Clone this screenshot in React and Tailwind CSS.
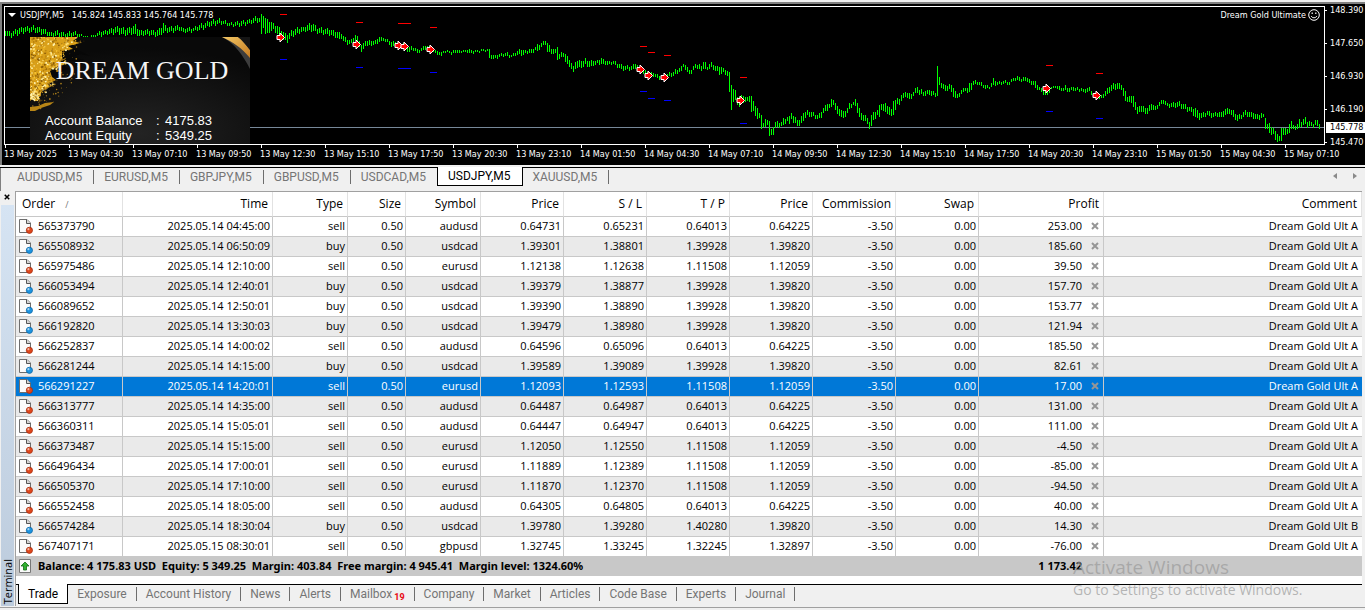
import { useState } from 'react'

// Bar extremes per chart segment: [x, high, low], in thirds of a chart unit
const SEGMENTS = [
  {
    start: 0,
    points: [
      [15, 91, 106], [33, 97, 111], [57, 84, 102], [81, 81, 96], [99, 79, 94], [123, 84, 101], [141, 91, 106],
      [153, 98, 111], [171, 93, 108], [195, 99, 111], [225, 94, 108], [240, 103, 111], [262, 109, 112], [280, 104, 110],
      [300, 94, 109], [320, 91, 103], [335, 86, 102], [350, 80, 99], [375, 86, 105], [390, 82, 103], [399, 80, 100],
      [405, 72, 104], [411, 82, 106], [420, 92, 107], [450, 90, 105], [470, 93, 110], [480, 84, 106], [487, 78, 100],
      [490, 68, 99], [497, 80, 97], [510, 82, 97], [540, 77, 90], [550, 84, 97], [580, 84, 94], [605, 73, 88],
      [630, 62, 78], [650, 60, 74], [660, 58, 70], [690, 69, 78], [720, 65, 79], [745, 61, 72], [770, 50, 66],
      [778, 54, 67], [784, 42, 101], [790, 48, 84], [796, 55, 101], [802, 58, 100], [820, 70, 88], [838, 82, 108],
      [850, 97, 120], [862, 104, 128], [870, 96, 114], [890, 85, 104], [910, 81, 94], [930, 72, 92], [940, 71, 93],
      [950, 85, 99], [980, 86, 104], [1000, 91, 107], [1018, 97, 116],
    ],
  },
  {
    start: 340,
    points: [
      [4, 101, 118], [10, 107, 122], [22, 120, 134], [34, 118, 130], [46, 104, 120], [52, 107, 122], [64, 135, 156],
      [70, 130, 147], [76, 123, 139], [94, 124, 138], [106, 120, 132], [118, 110, 125], [130, 115, 124], [142, 116, 126],
      [148, 122, 136], [154, 127, 142], [166, 127, 142], [190, 130, 145], [208, 140, 155], [222, 140, 150],
      [232, 147, 159], [244, 144, 154], [256, 138, 150], [268, 137, 148], [286, 150, 158], [292, 153, 165],
      [304, 156, 167], [310, 152, 160], [328, 152, 160], [334, 155, 164], [346, 150, 160], [358, 150, 159],
      [376, 149, 154], [388, 147, 158], [394, 150, 160], [412, 150, 155], [430, 147, 153], [442, 146, 152],
      [448, 147, 174], [454, 165, 177], [466, 164, 175], [484, 159, 168], [502, 157, 169], [514, 165, 172],
      [526, 158, 168], [538, 148, 162], [544, 150, 168], [556, 149, 160], [574, 148, 159], [586, 141, 151],
      [592, 132, 153], [604, 130, 140], [616, 123, 135], [622, 128, 155], [634, 148, 162], [646, 147, 160],
      [652, 141, 179], [658, 162, 176], [670, 158, 170], [676, 161, 187], [688, 180, 200], [700, 198, 216],
      [706, 186, 206], [718, 180, 200], [730, 182, 200], [736, 174, 193], [748, 183, 200], [760, 184, 199],
      [772, 180, 189], [784, 174, 193], [796, 184, 195], [808, 182, 192], [826, 182, 194], [838, 193, 205],
      [850, 198, 212], [862, 196, 207], [874, 198, 211], [886, 192, 206], [898, 200, 210], [910, 207, 222],
      [922, 217, 226], [940, 219, 230], [952, 222, 233], [958, 228, 240], [970, 225, 240], [982, 222, 232],
      [988, 216, 228], [1000, 217, 227], [1006, 207, 221], [1018, 205, 215],
    ],
  },
  {
    start: 680,
    points: [
      [4, 197, 213], [10, 192, 202], [22, 200, 215], [34, 211, 222], [46, 192, 205], [64, 198, 212], [70, 186, 206],
      [76, 186, 207], [82, 200, 210], [94, 186, 201], [106, 199, 214], [112, 198, 214], [118, 201, 224],
      [130, 203, 217], [142, 212, 228], [148, 215, 276], [154, 256, 330], [160, 267, 306], [166, 270, 300],
      [172, 290, 315], [178, 290, 320], [190, 288, 308], [202, 291, 302], [208, 289, 306], [214, 289, 335],
      [220, 304, 334], [232, 324, 357], [238, 338, 355], [244, 345, 387], [250, 368, 382], [256, 357, 382],
      [262, 360, 376], [268, 363, 408], [274, 387, 404], [280, 382, 405], [286, 367, 385], [304, 367, 378],
      [310, 354, 375], [322, 351, 362], [328, 348, 372], [334, 340, 357], [340, 349, 369], [358, 360, 378],
      [370, 340, 363], [382, 330, 346], [394, 336, 350], [412, 345, 357], [424, 337, 354], [430, 324, 340],
      [442, 313, 333], [448, 312, 325], [454, 297, 320], [460, 301, 316], [472, 319, 342], [490, 334, 354],
      [502, 325, 340], [508, 310, 327], [520, 305, 315], [526, 297, 318], [532, 309, 340], [544, 338, 360],
      [556, 345, 362], [568, 367, 386], [574, 346, 378], [580, 337, 360], [592, 330, 345], [598, 315, 350],
      [604, 312, 330], [616, 309, 336], [634, 328, 348], [640, 303, 346], [652, 294, 312], [658, 297, 316],
      [664, 285, 303], [676, 276, 292], [688, 280, 297], [700, 275, 288], [712, 261, 278], [718, 270, 285],
      [736, 273, 287], [748, 270, 285], [766, 279, 290], [772, 198, 287], [778, 231, 255], [784, 249, 263],
      [796, 255, 273], [808, 252, 267], [820, 265, 292], [832, 283, 293], [844, 270, 282], [856, 264, 274],
      [862, 264, 278], [868, 250, 277], [880, 242, 255], [892, 245, 254], [904, 246, 257], [916, 255, 267],
      [928, 261, 267], [940, 234, 254], [952, 246, 254], [964, 247, 254], [976, 240, 250], [988, 246, 254],
      [1000, 233, 242], [1018, 232, 244],
    ],
  },
  {
    start: 1020,
    points: [
      [4, 236, 246], [16, 231, 243], [28, 237, 249], [40, 242, 254], [46, 243, 264], [58, 262, 270], [70, 270, 285],
      [82, 262, 285], [94, 262, 268], [106, 258, 264], [118, 258, 270], [130, 264, 272], [136, 255, 270],
      [148, 264, 276], [160, 262, 272], [184, 264, 273], [190, 267, 276], [208, 262, 274], [220, 280, 290],
      [232, 286, 297], [244, 285, 294], [256, 274, 287], [268, 262, 280], [280, 249, 267], [298, 249, 266],
      [304, 255, 270], [316, 273, 303], [322, 290, 305], [334, 288, 308], [340, 288, 320], [352, 322, 342],
      [358, 318, 336], [370, 317, 335], [382, 325, 342], [394, 313, 330], [406, 318, 331], [418, 306, 318],
      [430, 300, 313], [442, 308, 319], [466, 310, 325], [478, 302, 318], [490, 313, 327], [514, 322, 336],
      [526, 325, 352], [538, 340, 360], [550, 337, 350], [562, 334, 346], [574, 340, 355], [586, 337, 348],
      [604, 336, 351], [616, 326, 345], [628, 327, 342], [640, 331, 350], [652, 345, 363], [664, 344, 358],
      [676, 329, 344], [688, 337, 350], [700, 340, 357], [712, 342, 358], [724, 339, 355], [730, 341, 352],
      [736, 354, 388], [742, 373, 386], [748, 369, 400], [760, 385, 402], [766, 393, 420], [778, 407, 423],
      [784, 383, 423], [790, 384, 405], [802, 386, 403], [808, 372, 398], [814, 363, 388], [820, 374, 388],
      [832, 373, 387], [838, 358, 384], [844, 365, 380], [856, 351, 372], [862, 366, 385], [868, 362, 378],
      [880, 373, 383], [886, 360, 376], [892, 360, 378], [898, 373, 387],
    ],
  },
]

function buildBars() {
  let d = ''
  SEGMENTS.forEach(({ start, points }) => {
    let k = 0
    const end = start + points[points.length - 1][0] / 3
    for (let x = start % 2 ? start : start + 1; x <= end + 1; x += 2) {
      const t = (x - start) * 3 + 1
      if (t < points[0][0] - 3) continue
      while (k < points.length - 2 && points[k + 1][0] <= t) k++
      const [x0, h0, l0] = points[k]
      const [x1, h1, l1] = points[k + 1]
      const f = Math.min(1, Math.max(0, (t - x0) / (x1 - x0)))
      const wobble = f > 0 && f < 1 ? ((x * 7) % 3) - 1 : 0
      const high = Math.round((h0 + (h1 - h0) * f) / 3) + wobble
      const low = Math.round((l0 + (l1 - l0) * f) / 3) + wobble
      d += `M${x + 0.5} ${high}V${Math.max(low, high + 2)}`
    }
  })
  return d
}

const BARS = buildBars()

// x, arrow y, stop line y, target line y
const TRADES = [
  [280, 37, 14, 59], [356, 44, 22, 67], [398, 45, 23, 68], [404, 46, 23, 68], [430, 49, 27, 72], [640, 69, 46, 91],
  [648, 75, 52, 98], [664, 77, 55, 100], [740, 100, 77, 123], [1046, 88, 65, 111], [1096, 95, 73, 118],
]

const TIMES = [
  '13 May 2025', '13 May 04:30', '13 May 07:10', '13 May 09:50', '13 May 12:30', '13 May 15:10', '13 May 17:50',
  '13 May 20:30', '13 May 23:10', '14 May 01:50', '14 May 04:30', '14 May 07:10', '14 May 09:50', '14 May 12:30',
  '14 May 15:10', '14 May 17:50', '14 May 20:30', '14 May 23:10', '15 May 01:50', '15 May 04:30', '15 May 07:10',
]

const PRICES = ['148.390', '147.650', '146.930', '146.190', '145.470']

const CHART_TABS = ['AUDUSD,M5', 'EURUSD,M5', 'GBPJPY,M5', 'GBPUSD,M5', 'USDCAD,M5', 'USDJPY,M5', 'XAUUSD,M5']

const TERMINAL_TABS = [
  'Trade', 'Exposure', 'Account History', 'News', 'Alerts', 'Mailbox', 'Company', 'Market', 'Articles', 'Code Base',
  'Experts', 'Journal',
]

const COLUMNS = [
  ['Order', 'w-[107px]'], ['Time', 'w-[150px]'], ['Type', 'w-[75px]'], ['Size', 'w-[58px]'], ['Symbol', 'w-[75px]'],
  ['Price', 'w-[83px]'], ['S / L', 'w-[83px]'], ['T / P', 'w-[83px]'], ['Price', 'w-[83px]'],
  ['Commission', 'w-[83px]'], ['Swap', 'w-[83px]'], ['Profit', 'w-[125px]'], ['Comment', ''],
]

const ORDERS = [
  ['565373790', '2025.05.14 04:45:00', 'sell', 'audusd', '0.64731', '0.65231', '0.64013', '0.64225', '253.00', 'A'],
  ['565508932', '2025.05.14 06:50:09', 'buy', 'usdcad', '1.39301', '1.38801', '1.39928', '1.39820', '185.60', 'A'],
  ['565975486', '2025.05.14 12:10:00', 'sell', 'eurusd', '1.12138', '1.12638', '1.11508', '1.12059', '39.50', 'A'],
  ['566053494', '2025.05.14 12:40:01', 'buy', 'usdcad', '1.39379', '1.38877', '1.39928', '1.39820', '157.70', 'A'],
  ['566089652', '2025.05.14 12:50:01', 'buy', 'usdcad', '1.39390', '1.38890', '1.39928', '1.39820', '153.77', 'A'],
  ['566192820', '2025.05.14 13:30:03', 'buy', 'usdcad', '1.39479', '1.38980', '1.39928', '1.39820', '121.94', 'A'],
  ['566252837', '2025.05.14 14:00:02', 'sell', 'audusd', '0.64596', '0.65096', '0.64013', '0.64225', '185.50', 'A'],
  ['566281244', '2025.05.14 14:15:00', 'buy', 'usdcad', '1.39589', '1.39089', '1.39928', '1.39820', '82.61', 'A'],
  ['566291227', '2025.05.14 14:20:01', 'sell', 'eurusd', '1.12093', '1.12593', '1.11508', '1.12059', '17.00', 'A'],
  ['566313777', '2025.05.14 14:35:00', 'sell', 'audusd', '0.64487', '0.64987', '0.64013', '0.64225', '131.00', 'A'],
  ['566360311', '2025.05.14 15:05:01', 'sell', 'audusd', '0.64447', '0.64947', '0.64013', '0.64225', '111.00', 'A'],
  ['566373487', '2025.05.14 15:15:00', 'sell', 'eurusd', '1.12050', '1.12550', '1.11508', '1.12059', '-4.50', 'A'],
  ['566496434', '2025.05.14 17:00:01', 'sell', 'eurusd', '1.11889', '1.12389', '1.11508', '1.12059', '-85.00', 'A'],
  ['566505370', '2025.05.14 17:10:00', 'sell', 'eurusd', '1.11870', '1.12370', '1.11508', '1.12059', '-94.50', 'A'],
  ['566552458', '2025.05.14 18:05:00', 'sell', 'audusd', '0.64305', '0.64805', '0.64013', '0.64225', '40.00', 'A'],
  ['566574284', '2025.05.14 18:30:04', 'buy', 'usdcad', '1.39780', '1.39280', '1.40280', '1.39820', '14.30', 'B'],
  ['567407171', '2025.05.15 08:30:01', 'sell', 'gbpusd', '1.32745', '1.33245', '1.32245', '1.32897', '-76.00', 'A'],
]

function buildFlakes() {
  const edge = [[0, 46], [8, 40], [14, 34], [20, 36], [28, 29], [35, 21], [42, 24], [50, 16], [56, 10], [64, 2]]
  const tones = ['#ffe27a', '#8a5c08', '#f7c331', '#b57d0c', '#fff2ae', '#d99c14']
  const flakes = []
  let seed = 17
  const rand = () => {
    seed = (seed * 16807) % 2147483647
    return seed / 2147483647
  }
  for (let i = 0; i < 620; i++) {
    const y = rand() * 64
    const k = edge.findIndex(([ey]) => ey > y)
    const limit = edge[(k < 1 ? edge.length : k) - 1][1]
    flakes.push([rand() * limit, y, 0.4 + rand() * 0.7, tones[i % tones.length]])
  }
  for (let i = 0; i < 90; i++) {
    const y = rand() * 72
    flakes.push([46 - y * 0.5 + (rand() + rand() - 1) * 22, y, 0.3 + rand() * 0.6, '#a87c1c'])
  }
  return flakes
}

const FLAKES = buildFlakes()

function GoldArt() {
  return (
    <svg className="absolute inset-0 h-full w-full" viewBox="0 0 220 107" preserveAspectRatio="none" aria-hidden="true">
      <defs>
        <radialGradient id="panel" cx="0.5" cy="0.9" r="0.8">
          <stop offset="0" stopColor="#232323" />
          <stop offset="1" stopColor="#090909" />
        </radialGradient>
        <linearGradient id="ribbon" x1="0" y1="0" x2="1" y2="1">
          <stop offset="0" stopColor="#f3c765" />
          <stop offset="1" stopColor="#c47a20" />
        </linearGradient>
      </defs>
      <rect width="220" height="107" fill="url(#panel)" />
      <path d="M0 0H48L43 4L50 6L38 9L43 12L34 14L38 18L40 21L30 24L34 27L27 30L20 33L27 36L22 40L26 43L18 47L20 50L13 53L10 57L5 59L0 64Z" fill="#d9a01a" />
      <path d="M0 70L8 69L15 66L24 65L20 68L11 71L5 74L0 74Z" fill="#b98616" />
      <path d="M32 14L46 12L60 19L50 17L42 20L54 23L42 24L32 22ZM20 34L34 29L40 32L28 35L34 39L22 40Z" fill="#070707" />
      {FLAKES.map(([x, y, r, fill], i) => (
        <circle key={i} cx={x} cy={y} r={r} fill={fill} />
      ))}
      <path d="M192 0C204 6 213 18 220 32V0Z" fill="#3d3d3d" />
      <path d="M192 0C203 5 212 11 220 21V13C216 8 212 3 208 0Z" fill="url(#ribbon)" />
      <path d="M208 0C212 3 216 8 220 13V0Z" fill="#151515" />
    </svg>
  )
}

function OrderIcon({ type }) {
  return (
    <svg className="h-4 w-4 shrink-0" viewBox="0 0 16 16" aria-hidden="true">
      <path d="M2.5 1.5H10L13.5 5V14.5H2.5Z" fill="#fbfbfb" stroke="#6e6e6e" />
      <path d="M9.5 1.5V5.5H13.5" fill="#d8d8d8" stroke="#555" />
      <circle cx="12.4" cy="12.3" r="3.1" fill={type === 'sell' ? '#e0481c' : '#1c94e0'} stroke={type === 'sell' ? '#a82c0c' : '#0c68a8'} strokeWidth="0.8" />
      <circle cx="11.4" cy="11.2" r="1.1" fill="#fff" opacity="0.6" />
    </svg>
  )
}

function CrossIcon({ className }) {
  return (
    <svg className={className} viewBox="0 0 8 8" aria-hidden="true">
      <path d="M1 1L7 7M7 1L1 7" stroke="currentColor" strokeWidth="2" />
    </svg>
  )
}

function PriceChart() {
  return (
    <section className="border-l-2 border-t-2 border-[#808080] bg-black pb-1 pl-[2px] pt-[2px] font-['DejaVu_Sans_Condensed','Open_Sans',sans-serif] text-[9px] leading-3 text-white">
      <div className="flex h-[139px]">
        <div className="relative min-w-0 flex-1 border border-white">
          <svg className="block h-full w-full" viewBox="5 7 1319 137" preserveAspectRatio="none" shapeRendering="crispEdges" role="img" aria-label="USDJPY price chart">
            <path d="M5 127.5H1324" stroke="#778899" />
            <path d={BARS} stroke="#00ff00" fill="none" />
            {TRADES.map(([x, , stop, target]) => (
              <g key={x}>
                <path d={`M${x} ${stop + 0.5}h7`} stroke="#ff0000" />
                <path d={`M${x} ${target + 0.5}h7`} stroke="#0000ff" />
              </g>
            ))}
            {TRADES.map(([x, y]) => (
              <path key={x} d={`M${x - 3} ${y - 1.5}h3v-2.5l4.5 4.5l-4.5 4.5v-2.5h-3z`} fill="#ff0000" stroke="#fff" shapeRendering="auto" />
            ))}
          </svg>
          <div className="absolute left-[3px] top-[2px] flex items-center gap-1">
            <svg className="h-1 w-2" viewBox="0 0 8 4" aria-hidden="true">
              <path d="M0 0H8L4 4Z" fill="#fff" />
            </svg>
            <span className="whitespace-pre">USDJPY,M5   145.824 145.833 145.764 145.778</span>
          </div>
          <div className="absolute right-1 top-[2px] flex items-center gap-[2px]">
            <span>Dream Gold Ultimate</span>
            <svg className="h-3 w-3" viewBox="0 0 12 12" fill="none" stroke="#fff" aria-hidden="true">
              <circle cx="6" cy="6" r="5.3" />
              <path d="M3.2 7C4 9.3 8 9.3 8.8 7" />
              <path d="M4.2 3.5V5M7.8 3.5V5" strokeWidth="1.2" />
            </svg>
          </div>
          <div className="absolute bottom-0 left-[25px] h-[107px] w-[220px] overflow-hidden">
            <GoldArt />
            <div className="relative flex h-full flex-col justify-between pb-px pt-[18px]">
              <h1 className="text-center font-['Liberation_Serif',serif] text-[26px] leading-8 text-neutral-100 pl-1">DREAM GOLD</h1>
              <dl className="grid grid-cols-[111px_9px_auto] pl-[15px] font-['Liberation_Sans',sans-serif] text-[13px] leading-[15px]">
                <dt>Account Balance</dt>
                <dd>:</dd>
                <dd>4175.83</dd>
                <dt>Account Equity</dt>
                <dd>:</dd>
                <dd>5349.25</dd>
              </dl>
            </div>
          </div>
        </div>
        <div className="relative -mt-[2px] flex w-10 flex-col gap-[21px]">
          {PRICES.map((price) => (
            <div key={price} className="flex h-3 items-center gap-[3px]">
              <span className="h-px w-[2px] bg-white" />
              <span>{price}</span>
            </div>
          ))}
          <span className="absolute bottom-3 left-px right-0 h-[11px] bg-white pl-1 leading-[11px] text-black">145.778</span>
        </div>
      </div>
      <ol className="flex h-4 overflow-hidden">
        {TIMES.map((time) => (
          <li key={time} className="flex w-16 shrink-0 flex-col whitespace-nowrap">
            <span className="ml-px h-[3px] w-px bg-white" />
            <span>{time}</span>
          </li>
        ))}
      </ol>
    </section>
  )
}

function ChartTabs() {
  const [active, setActive] = useState('USDJPY,M5')

  return (
    <nav className="flex h-[23px] items-start border-l border-[#808080] pl-[6px]">
      <div className="flex min-w-0 flex-1 items-start">
        {CHART_TABS.map((tab) => (
          <button
            key={tab}
            onClick={() => setActive(tab)}
            className={
              tab === active
                ? '-ml-px -mt-px h-[19px] border-x border-b border-black bg-white pl-[10px] pr-[11px] text-black'
                : 'mt-[2px] h-[14px] border-r border-[#6d6d6d] pl-[10px] pr-[11px] leading-[14px] text-[#757575] [&:has(+.bg-white)]:border-transparent'
            }
          >
            {tab}
          </button>
        ))}
      </div>
      <div className="mt-1 flex gap-3 pr-[6px] text-[#8a8a8a]">
        <button aria-label="Scroll tabs left">
          <svg className="block h-2 w-2" viewBox="0 0 8 8" aria-hidden="true"><path d="M6 1V7L2 4Z" fill="currentColor" /></svg>
        </button>
        <button aria-label="Scroll tabs right">
          <svg className="block h-2 w-2" viewBox="0 0 8 8" aria-hidden="true"><path d="M2 1V7L6 4Z" fill="currentColor" /></svg>
        </button>
      </div>
    </nav>
  )
}

function OrdersTable() {
  const [selected, setSelected] = useState('566291227')

  return (
    <table className="w-full table-fixed border-separate border-spacing-0 text-right">
      <thead>
        <tr>
          {COLUMNS.map(([name, width], i) => (
            <th key={i} className={`${width} h-[25px] border-b border-r border-b-[#c8c8c8] border-r-[#e2e2e2] p-0 pr-1 text-xs leading-4 font-normal first:pl-[6px] first:text-left`}>
              {name}
              {i === 0 && <span className="ml-[10px] text-[9px] text-[#777]">/</span>}
            </th>
          ))}
        </tr>
      </thead>
      <tbody>
        {ORDERS.map(([id, time, type, symbol, open, sl, tp, price, profit, set]) => (
          <tr
            key={id}
            onClick={() => setSelected(id)}
            className={id === selected ? 'bg-[#0078d7] text-white' : 'odd:bg-white even:bg-[#eaeaea]'}
          >
            <td className="h-5 border-b border-r border-[#c8c8c8] p-0 pb-[2px]">
              <div className="flex items-center gap-[5px] pl-px">
                <OrderIcon type={type} />
                {id}
              </div>
            </td>
            {[time, type, '0.50', symbol, open, sl, tp, price, '-3.50', '0.00'].map((value, i) => (
              <td key={i} className="border-b border-r border-[#c8c8c8] p-0 pb-[2px] pr-[2px]">{value}</td>
            ))}
            <td className="border-b border-r border-[#c8c8c8] p-0 pb-[2px] pr-1">
              <div className="flex items-center justify-end gap-[9px]">
                {profit}
                <button aria-label={`Close order ${id}`} className="pt-px text-[#969696]">
                  <CrossIcon className="block h-2 w-2" />
                </button>
              </div>
            </td>
            <td className="border-b border-[#c8c8c8] p-0 pb-[2px] pr-1">Dream Gold Ult {set}</td>
          </tr>
        ))}
      </tbody>
      <tfoot>
        <tr className="bg-[#c8c8c8] font-['Noto_Sans','Open_Sans',sans-serif] font-bold">
          <td colSpan={11} className="h-[19px] p-0 pb-[2px]">
            <div className="flex items-center gap-[3px] pl-[3px]">
              <svg className="h-4 w-4 shrink-0" viewBox="0 0 16 16" aria-hidden="true">
                <path d="M0.5 1.5H11.5V14.5H0.5Z" fill="#fafafa" stroke="#777" />
                <path d="M6 4L10 8H7.5V12H4.5V8H2Z" fill="#2fae2f" stroke="#126b12" strokeWidth="0.8" />
              </svg>
              <span className="whitespace-pre">Balance: 4 175.83 USD  Equity: 5 349.25  Margin: 403.84  Free margin: 4 945.41  Margin level: 1324.60%</span>
            </div>
          </td>
          <td className="p-0 pb-[2px] pr-[22px]">1 173.42</td>
          <td className="p-0" />
        </tr>
      </tfoot>
    </table>
  )
}

function TerminalTabs() {
  const [active, setActive] = useState('Trade')

  return (
    <nav className="flex h-[22px] items-start border-t border-black bg-[#f0f0f0] pl-[2px] text-xs">
      {TERMINAL_TABS.map((tab) => (
        <button
          key={tab}
          onClick={() => setActive(tab)}
          className={
            tab === active
              ? '-mt-px h-5 border-x border-b border-black bg-white px-[9px] text-black'
              : 'mt-[2px] h-[14px] border-r border-[#6d6d6d] px-[9px] leading-[14px] text-[#757575]'
          }
        >
          {tab}
          {tab === 'Mailbox' && <sub className="ml-[2px] text-[9px] font-bold leading-none text-red-600">19</sub>}
        </button>
      ))}
    </nav>
  )
}

export default function App() {
  return (
    <div className="relative min-h-screen overflow-hidden bg-[#f0f0f0] pt-[2px] font-['Open_Sans','Noto_Sans',sans-serif] text-[11px] leading-4 text-black">
      <PriceChart />
      <div className="mt-[2px] border-t border-black font-[Roboto,'Open_Sans',sans-serif] text-xs">
        <ChartTabs />
      </div>
      <main className="flex pr-[3px]">
        <aside className="flex w-[15px] shrink-0 flex-col">
          <button aria-label="Close terminal" className="flex h-[14px] items-start justify-center pr-[2px] pt-[3px]">
            <CrossIcon className="h-[6px] w-[6px]" />
          </button>
          <div className="ml-px mr-px flex flex-1 items-end justify-center bg-linear-to-b from-[#d6e4f3] to-[#bccbdc] pb-[2px]">
            <span className="rotate-180 text-[11px] leading-3 [writing-mode:vertical-rl]">Terminal</span>
          </div>
        </aside>
        <div className="min-w-0 flex-1 border-l border-t border-[#a0a0a0] bg-white">
          <OrdersTable />
          <div className="mt-2 font-[Roboto,'Open_Sans',sans-serif]">
            <TerminalTabs />
          </div>
        </div>
      </main>
      <div className="mt-px border-t border-[#a0a0a0]" />
      <div className="pointer-events-none absolute bottom-[10px] right-14 w-[236px] whitespace-nowrap text-[#9a9a9a]/70">
        <p className="text-[19px] leading-[26px]">Activate Windows</p>
        <p className="text-sm leading-5">Go to Settings to activate Windows.</p>
      </div>
    </div>
  )
}
